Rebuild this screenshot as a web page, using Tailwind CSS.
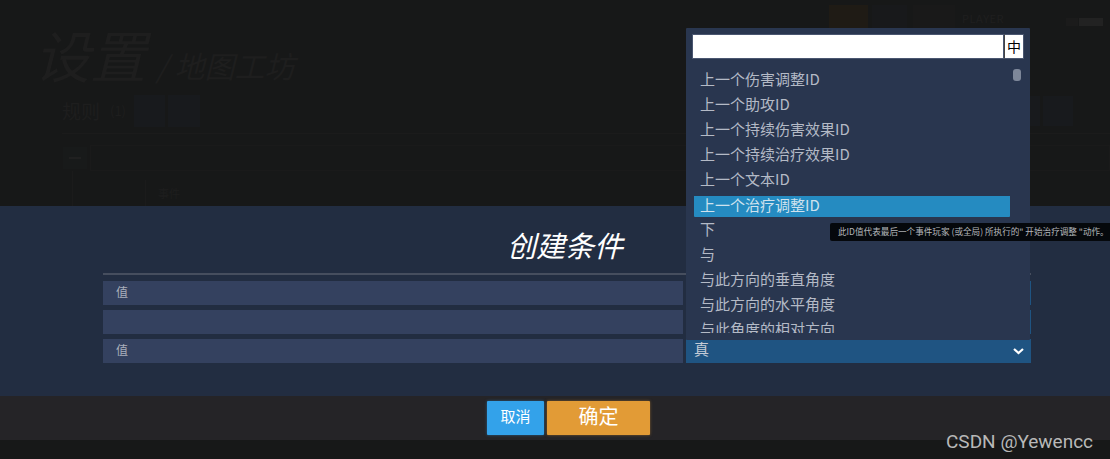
<!DOCTYPE html>
<html lang="en">
  <head>
    <meta charset="UTF-8" />
    <title>设置 / 地图工坊</title>
    <script src="https://cdn.jsdelivr.net/npm/@tailwindcss/browser@4"></script>
  </head>

  <body>
    <div class="relative w-[1110px] h-[459px] overflow-hidden flex flex-col bg-[#171818] font-['Noto_Sans_CJK_SC','Liberation_Sans',sans-serif]">
      <!-- Dimmed settings page -->
      <div class="h-[206px] shrink-0 overflow-hidden pt-[5px] text-[#1e1e1e]">
        <div class="h-[23px] flex">
          <div class="ml-[829px] w-[39px] bg-[#1f1b15]"></div>
          <div class="ml-[4px] w-[35px] bg-[#18191b]"></div>
          <div class="ml-[6px] w-[42px] bg-[#191919]"></div>
          <span class="ml-[7px] text-[11px] leading-[26px] tracking-wider text-[#1f1f1f]">PLAYER</span>
          <span class="ml-[62px] mt-[13px] h-[8px] w-[12px] bg-[#1b1b1b]"></span>
          <span class="ml-[1px] mt-[13px] h-[8px] w-[24px] bg-[#222222]"></span>
        </div>
        <div class="pl-[34px] -mt-[5px] h-[61px] flex items-center italic">
          <span class="text-[56px] leading-[61px]">设置</span>
          <span class="ml-[10px] mt-[22px] text-[30px] leading-[36px]">/ 地图工坊</span>
        </div>
        <div class="pl-[62px] mt-[11px] flex items-center h-[32px]">
          <span class="text-[19px]">规则</span>
          <span class="ml-[10px] text-[13px]">(1)</span>
          <div class="ml-[8px] w-[31px] h-[32px] bg-[#181a1d]"></div>
          <div class="ml-[3px] w-[32px] h-[32px] bg-[#181a1d]"></div>
          <div class="ml-auto w-[22px] h-[30px] bg-[#181a1d]"></div>
          <div class="ml-[3px] mr-[37px] w-[30px] h-[30px] bg-[#181a1d]"></div>
        </div>
        <div class="ml-[62px] mt-[6px] h-px bg-[#1b1b1b]"></div>
        <div class="ml-[63px] mt-[11px] flex items-center gap-[3px] h-[26px]">
          <div class="w-[24px] h-[22px] bg-[#181a1a] flex items-center justify-center">
            <div class="w-[12px] h-[2px] bg-[#202020]"></div>
          </div>
          <div class="flex-1 h-[26px] border border-[#1a1a1a]"></div>
        </div>
        <div class="ml-[72px] h-[35px] pt-[9px] pl-[72px] border-l border-[#1b1b1b]">
          <div class="pl-[12px] border-l border-[#1b1b1b] text-[11px] leading-[26px]">事件</div>
        </div>
      </div>

      <!-- Create condition dialog -->
      <div class="h-[190px] shrink-0 bg-[#222d41] px-[103px] pt-[10px]">
        <h2 class="pl-[20px] text-center text-[29px] font-normal leading-[57px] italic text-white">创建条件</h2>
        <div class="w-[928px] h-[2px] bg-[#464e5e]"></div>
        <div class="mt-[6px] w-[928px] grid grid-cols-[580px_345px] gap-x-[3px] gap-y-[5px] text-[12px] text-[#aab0bc]">
          <div class="h-[24px] bg-[#34415f] pl-[13px] leading-[21px]">值</div>
          <div class="h-[24px] bg-[#1f5482]"></div>
          <div class="h-[24px] bg-[#34415f]"></div>
          <div class="h-[24px] bg-[#1f5482]"></div>
          <div class="h-[24px] bg-[#34415f] pl-[13px] leading-[21px]">值</div>
          <div class="h-[24px] bg-[#1f5482] pl-[8px] pr-[7px] flex items-center justify-between text-[15px] text-[#c4cbd6]">
            <span class="-mt-[3px]">真</span>
            <svg class="w-[11px] h-[8px]" viewBox="0 0 11 8" fill="none" stroke="#ffffff" stroke-width="2.2"><path d="M1 2 L5.5 6 L10 2" /></svg>
          </div>
        </div>
      </div>

      <!-- Footer buttons -->
      <div class="h-[44px] shrink-0 bg-[#252427] pl-[487px] pt-[5px] flex gap-[3px]">
        <button class="w-[57px] h-[34px] pb-[3px] bg-[#33a2ea] rounded-[1px] text-[15px] text-white shadow-[0_0_3px_#33a2ea80]">取消</button>
        <button class="w-[103px] h-[34px] pb-[4px] bg-[#e29b36] rounded-[1px] text-[20px] text-white shadow-[0_0_3px_#e29b3680]">确定</button>
      </div>

      <!-- Dropdown list open over the dialog -->
      <div class="absolute left-[686px] top-[28px] w-[344px] h-[312px] bg-[#29364f] rounded-[1px] overflow-hidden">
        <div class="ml-[6px] mt-[6px] flex h-[25px] w-[332px]">
          <div class="w-[312px] bg-white border border-[#4a5670]"></div>
          <div class="w-[20px] bg-white border border-[#4a5670] border-l-[#444444] text-[14px] leading-[22px] text-center text-black">中</div>
        </div>
        <div class="absolute right-[9px] top-[41px] w-[8px] h-[12px] rounded-[3px] bg-[#7d8799]"></div>
        <ul class="mt-[7px] h-[267px] overflow-hidden text-[15px] leading-[25px] text-[#b4bac6]">
          <li class="pl-[14px]">上一个伤害调整ID</li>
          <li class="pl-[14px]">上一个助攻ID</li>
          <li class="pl-[14px]">上一个持续伤害效果ID</li>
          <li class="pl-[14px]">上一个持续治疗效果ID</li>
          <li class="pl-[14px]">上一个文本ID</li>
          <li class="ml-[8px] w-[316px] pl-[6px] h-[26px] -mb-[1px] bg-[#258bc1] rounded-[1px] border-t-[5px] border-[#29364f] leading-[17px] text-[#cfe2ee]">上一个治疗调整ID</li>
          <li class="pl-[14px]">下</li>
          <li class="pl-[14px]">与</li>
          <li class="pl-[14px]">与此方向的垂直角度</li>
          <li class="pl-[14px]">与此方向的水平角度</li>
          <li class="pl-[14px]">与此角度的相对方向</li>
        </ul>
      </div>

      <!-- Tooltip -->
      <div class="absolute left-[830px] top-[223px] w-[280px] h-[18px] pl-[8px] bg-[#05080c] rounded-l-[2px] text-[8.6px] leading-[17px] text-[#b5b8bc] whitespace-nowrap">此ID值代表最后一个事件玩家 (或全局) 所执行的" 开始治疗调整 "动作。</div>

      <!-- Watermark -->
      <span class="absolute left-[946px] top-[431px] font-['Roboto',sans-serif] text-[19px] leading-[22px] text-[#b8b8b8]">CSDN @Yewencc</span>
    </div>
  </body>
</html>
